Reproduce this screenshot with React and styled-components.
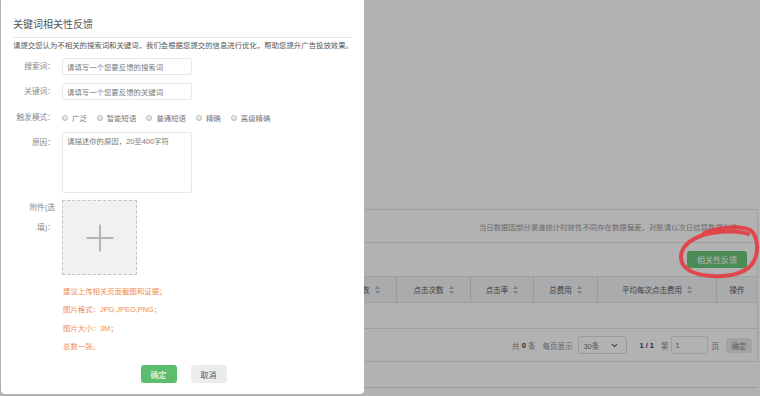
import React from "react";
import styled, { createGlobalStyle } from "styled-components";
import { ChevronDown } from "lucide-react";

const Global = createGlobalStyle`
  html, body { margin: 0; padding: 0; background: #fff; }
  body {
    width: 760px; height: 396px; overflow: hidden;
    font-family: "Liberation Sans", "Noto Sans CJK SC", sans-serif;
  }
  * { box-sizing: border-box; }
`;

/* ---------- background page ---------- */
const Page = styled.div`
  width: 760px;
  height: 396px;
  display: flex;
  flex-direction: column;
  padding: 209px 2px 0 9px;
`;

const Panel = styled.div`
  border: 1px solid #e4e4e4;
  display: flex;
  flex-direction: column;
`;

const Notice = styled.div`
  height: 33px;
  border-bottom: 1px solid #e4e4e4;
  display: flex;
  align-items: center;
  justify-content: flex-end;
  padding-right: 12px;
  font-size: 7.4px;
  color: #9a9a9a;
`;

const Toolbar = styled.div`
  height: 33px;
  display: flex;
  align-items: center;
  justify-content: flex-end;
  padding-right: 10px;
`;

const GreenButton = styled.button`
  width: 60px;
  height: 17px;
  border: none;
  border-radius: 3px;
  background: #6cc87c;
  color: #fff;
  font-family: inherit;
  font-size: 8px;
  padding: 0;
`;

const Grid = styled.div`
  display: grid;
  grid-template-columns: 1fr 74px 74px 63px 64px 119px 41px;
`;

const HeadRow = styled(Grid)`
  height: 27px;
  border-top: 1px solid #e4e4e4;
  border-bottom: 1px solid #e4e4e4;
  background: #f2f5f8;
`;

const HeadCell = styled.div`
  display: flex;
  align-items: center;
  justify-content: center;
  gap: 5px;
  font-size: 7.5px;
  color: #5a5a5a;
  border-left: ${(p) => (p.$first ? "none" : "1px solid #d9dadc")};
`;

const EmptyRow = styled.div`
  height: 26px;
  border-bottom: 1px solid #e4e4e4;
`;

const Pager = styled.div`
  height: 32px;
  display: flex;
  align-items: center;
  justify-content: flex-end;
  padding-right: 5px;
  font-size: 7.5px;
  color: #8a8a8a;
`;

const PagerText = styled.span`
  margin-left: ${(p) => p.$ml || 0}px;
  color: ${(p) => (p.$dark ? "#444" : "#8a8a8a")};
  font-weight: ${(p) => (p.$bold ? 700 : 400)};
  white-space: pre;
`;

const Select = styled.div`
  margin-left: 6px;
  width: 49px;
  height: 18px;
  border: 1px solid #dcdcdc;
  border-radius: 3px;
  display: flex;
  align-items: center;
  justify-content: space-between;
  padding: 0 7px 0 4px;
  color: #777;
`;

const PageInput = styled.div`
  margin-left: 2px;
  width: 37px;
  height: 18px;
  border: 1px solid #e2e2e2;
  border-radius: 2px;
  display: flex;
  align-items: center;
  padding-left: 4px;
  color: #777;
`;

const GreyButton = styled.div`
  margin-left: 7px;
  width: 26px;
  height: 15px;
  border-radius: 3px;
  background: #e9e9e9;
  color: #888;
  display: flex;
  align-items: center;
  justify-content: center;
`;

const Footer = styled.div`
  margin-top: 25px;
  margin-left: -9px;
  border-top: 1px solid #d6e4f3;
  height: 10px;
`;

/* ---------- overlay / modal ---------- */
const Overlay = styled.div`
  position: fixed;
  inset: 0;
  background: rgba(0, 0, 0, 0.3);
`;

const Modal = styled.div`
  position: fixed;
  top: -2px;
  left: 1px;
  width: 363px;
  height: 396px;
  background: #fff;
  border-radius: 4px;
  padding: 0 12px;
  display: flex;
  flex-direction: column;
`;

const Header = styled.div`
  padding: 18px 0 3px;
  border-bottom: 1px solid #e8e8e8;
`;

const Title = styled.div`
  font-size: 10px;
  line-height: 18px;
  color: #555;
`;

const Desc = styled.div`
  margin-top: 2px;
  font-size: 7.4px;
  line-height: 12px;
  color: #555;
  white-space: nowrap;
`;

const Row = styled.div`
  display: flex;
  align-items: ${(p) => (p.$top ? "flex-start" : "center")};
  gap: 7px;
  margin-top: ${(p) => p.$mt}px;
`;

const Label = styled.div`
  width: 42px;
  flex: none;
  text-align: right;
  font-size: 7.7px;
  line-height: ${(p) => p.$lh || 17}px;
  padding-top: ${(p) => p.$pt || 0}px;
  margin-top: ${(p) => p.$mt || 0}px;
  color: #888;
`;

const TextInput = styled.div`
  width: 130px;
  height: 17px;
  border: 1px solid #e8e8e8;
  border-radius: 2px;
  display: flex;
  align-items: center;
  padding-left: 4px;
  font-size: 7.4px;
  color: #7a7a7a;
`;

const TextArea = styled.div`
  width: 130px;
  height: 61px;
  border: 1px solid #e8e8e8;
  border-radius: 2px;
  padding: 3px 4px;
  font-size: 7.4px;
  line-height: 11px;
  color: #7a7a7a;
`;

const Radios = styled.div`
  display: flex;
  align-items: center;
  gap: 10px;
`;

const RadioItem = styled.label`
  display: flex;
  align-items: center;
  gap: 4px;
  font-size: 7.4px;
  color: #777;
`;

const Dot = styled.span`
  width: 6px;
  height: 6px;
  border-radius: 50%;
  border: 1px solid #b9b9b9;
  background: linear-gradient(#f6f6f6, #dedede);
`;

const Upload = styled.div`
  width: 75px;
  height: 75px;
  border: 1px dashed #c4c4c4;
  background: #f1f1f1;
  display: flex;
  align-items: center;
  justify-content: center;
`;

const Notes = styled.div`
  margin-top: 8px;
  padding-left: 50px;
  display: flex;
  flex-direction: column;
`;

const Note = styled.p`
  margin: 0;
  height: 18.3px;
  font-size: 7.4px;
  line-height: 18px;
  color: #f08c5a;
`;

const Actions = styled.div`
  margin-top: 9px;
  display: flex;
  justify-content: center;
  gap: 14px;
  padding-left: 2px;
`;

const ModalButton = styled.div`
  width: 36px;
  height: 18px;
  border-radius: 3px;
  display: flex;
  align-items: center;
  justify-content: center;
  font-size: 8px;
  background: ${(p) => (p.$primary ? "#5cbd6f" : "#ececec")};
  color: ${(p) => (p.$primary ? "#fff" : "#555")};
`;

const Annotation = styled.svg`
  position: fixed;
  left: 674px;
  top: 221px;
`;

const SortIcon = () => (
  <svg width="5" height="8" viewBox="0 0 5 8">
    <path d="M2.5 0 L5 3 H0 Z M2.5 8 L0 5 H5 Z" fill="#b8b8b8" />
  </svg>
);

const Plus = () => (
  <svg width="28" height="28" viewBox="0 0 28 28">
    <path d="M0.5 14 H27.5 M14 0.5 V27.5" stroke="#b4b4b4" strokeWidth="2" />
  </svg>
);

const headers = [
  { t: "", s: false },
  { t: "展现次数", s: true },
  { t: "点击次数", s: true },
  { t: "点击率", s: true },
  { t: "总费用", s: true },
  { t: "平均每次点击费用", s: true },
  { t: "操作", s: false },
];

const radios = ["广泛", "智能短语", "普通短语", "精确", "高级精确"];

const notes = [
  "建议上传相关页面截图和证据；",
  "图片格式：JPG,JPEG,PNG；",
  "图片大小：3M；",
  "总数一张。",
];

export default function App() {
  return (
    <>
      <Global />
      <Page>
        <Panel>
          <Notice>当日数据因部分渠道统计时效性不同存在数据偏差，对账请以次日结算数据为准。</Notice>
          <Toolbar>
            <GreenButton>相关性反馈</GreenButton>
          </Toolbar>
          <HeadRow>
            {headers.map((h, i) => (
              <HeadCell key={i} $first={i === 0}>
                {h.t}
                {h.s && <SortIcon />}
              </HeadCell>
            ))}
          </HeadRow>
          <EmptyRow />
          <Pager>
            <PagerText>共 </PagerText>
            <PagerText $dark $bold>0</PagerText>
            <PagerText> 条</PagerText>
            <PagerText $ml={7}>每页显示</PagerText>
            <Select>
              <span>30条</span>
              <ChevronDown size={9} strokeWidth={3.2} color="#666" />
            </Select>
            <PagerText $ml={12} $dark $bold>1 / 1</PagerText>
            <PagerText $ml={7}>第</PagerText>
            <PageInput>1</PageInput>
            <PagerText $ml={4}>页</PagerText>
            <GreyButton>确定</GreyButton>
          </Pager>
        </Panel>
        <Footer />
      </Page>
      <Overlay />
      <Modal>
        <Header>
          <Title>关键词相关性反馈</Title>
        </Header>
        <Desc>请提交您认为不相关的搜索词和关键词，我们会根据您提交的信息进行优化，帮助您提升广告投放效果。</Desc>
        <Row $mt={6}>
          <Label>搜索词：</Label>
          <TextInput>请填写一个您要反馈的搜索词</TextInput>
        </Row>
        <Row $mt={8}>
          <Label>关键词：</Label>
          <TextInput>请填写一个您要反馈的关键词</TextInput>
        </Row>
        <Row $mt={9}>
          <Label>触发模式：</Label>
          <Radios>
            {radios.map((r) => (
              <RadioItem key={r}>
                <Dot />
                {r}
              </RadioItem>
            ))}
          </Radios>
        </Row>
        <Row $mt={6} $top>
          <Label $pt={2}>原因：</Label>
          <TextArea>请描述你的原因，20至400字符</TextArea>
        </Row>
        <Row $mt={7} $top>
          <Label $lh={20} $mt={-2}>附件(选填)：</Label>
          <Upload>
            <Plus />
          </Upload>
        </Row>
        <Notes>
          {notes.map((n) => (
            <Note key={n}>{n}</Note>
          ))}
        </Notes>
        <Actions>
          <ModalButton $primary>确定</ModalButton>
          <ModalButton>取消</ModalButton>
        </Actions>
      </Modal>
      <Annotation width="86" height="60" viewBox="0 0 86 60">
        <path
          d="M30 12 C46 6, 66 4, 76 9 C84 14, 85 30, 80 40 C74 52, 56 56, 38 55 C20 54, 7 48, 7 36 C7 24, 20 15, 38 12 C52 10, 66 10, 74 13"
          fill="none"
          stroke="rgba(232,52,58,0.85)"
          strokeWidth="4"
          strokeLinecap="round"
        />
      </Annotation>
    </>
  );
}
